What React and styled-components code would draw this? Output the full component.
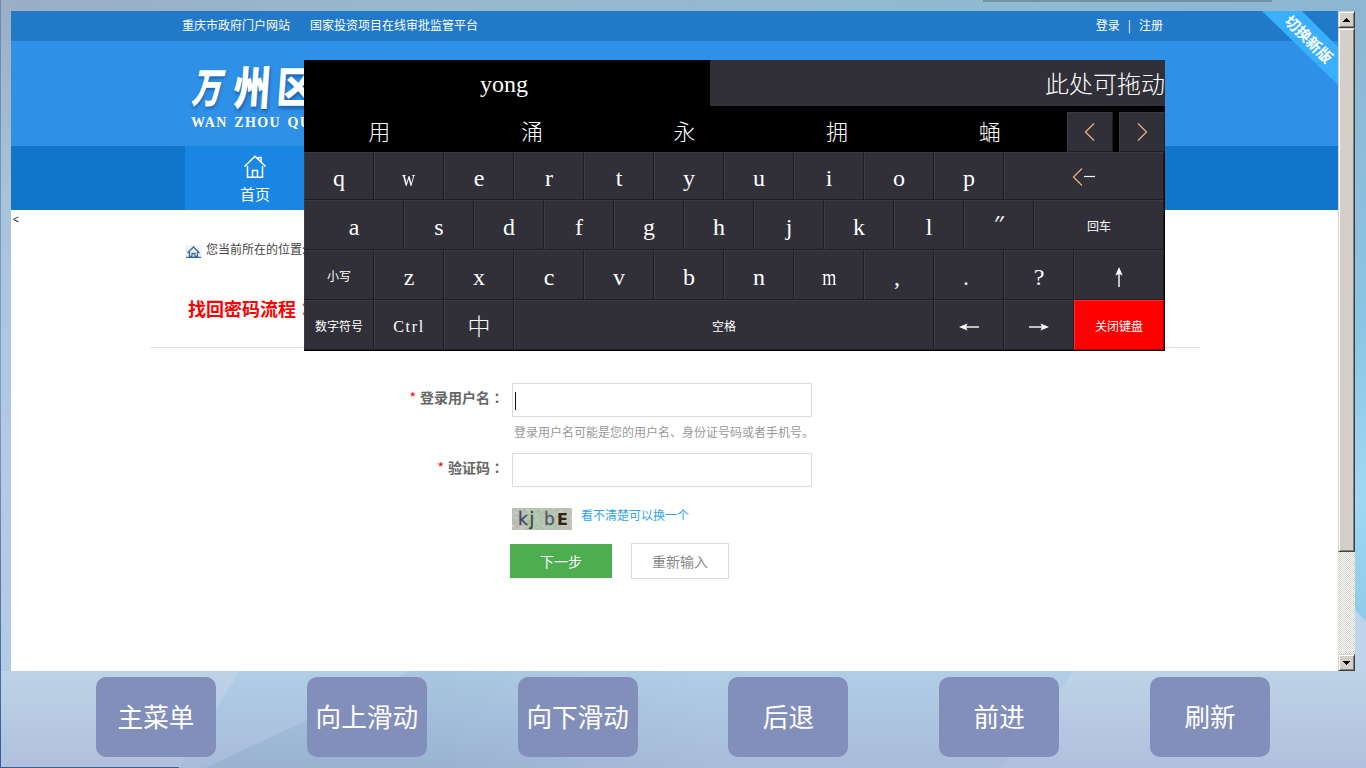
import React from 'react';
import styled, { createGlobalStyle } from 'styled-components';

const SANS = '"Noto Sans CJK SC", "Noto Sans", sans-serif';
const SERIF = '"Liberation Serif", "Noto Sans CJK SC", serif';

const GlobalStyle = createGlobalStyle`
  * { box-sizing: border-box; }
  body { margin: 0; overflow: hidden; font-family: ${SANS}; }
  button { padding: 0; font: inherit; cursor: pointer; }
`;

const Screen = styled.div`
  position: relative;
  width: 1366px;
  height: 768px;
  overflow: hidden;
  padding: 11px 11px 0;
`;

const Wallpaper = styled.svg`
  position: absolute;
  inset: 0;
  z-index: -1;
`;

const Browser = styled.div`
  display: flex;
  width: 1344px;
  height: 660px;
`;

const Page = styled.main`
  position: relative;
  width: 1327px;
  background: #fff;
  overflow: hidden;
`;

const TopBar = styled.div`
  display: flex;
  justify-content: space-between;
  height: 30px;
  padding: 0 175px 0 171px;
  background: #2279c7;
  color: #fff;
  font-size: 12px;
  line-height: 28px;
`;

const TopLinks = styled.div`
  display: flex;
  gap: ${(p) => p.$gap}px;
`;

const Header = styled.header`
  height: 105px;
  padding: 14px 0 0 180px;
  background: #2f90e7;
  color: #fff;
`;

const LogoName = styled.div`
  display: flex;
  height: 60px;
  align-items: center;
  gap: 6px;
  font-size: 37px;
  font-weight: 900;
  line-height: 56px;
  text-shadow: 1px 2px 3px rgba(10, 70, 140, 0.6);
`;

const LogoChar = styled.span`
  transform: skewX(${(p) => p.$skew || 0}deg) scale(${(p) => p.$sx || 1}, ${(p) => p.$sy || 1});
`;

const LogoLatin = styled.div`
  font: 700 14px/16px "Liberation Serif", serif;
  letter-spacing: 1.3px;
  word-spacing: 2px;
`;

const Nav = styled.nav`
  display: flex;
  height: 64px;
  padding-left: 174px;
  background: #1175cb;
`;

const NavItem = styled.a`
  display: flex;
  flex-direction: column;
  align-items: center;
  width: 140px;
  padding-top: 9px;
  background: #1a86e4;
  color: #fff;
  font-size: 15px;
  line-height: 22px;
  svg { margin-bottom: 4px; }
`;

const Stray = styled.div`
  height: 18px;
  padding-left: 2px;
  font: 10px/19px "Liberation Sans", sans-serif;
  color: #222;
`;

const Crumb = styled.div`
  display: flex;
  gap: 4px;
  height: 40px;
  padding: 11px 0 0 174px;
  color: #444;
  font-size: 12px;
  line-height: 20px;
  svg { margin-top: 6px; }
`;

const Title = styled.h1`
  height: 80px;
  width: 1050px;
  margin: 0 0 0 139px;
  padding: 26px 0 0 38px;
  border-bottom: 1px solid #e2e2e2;
  color: #f00;
  font-size: 18px;
  line-height: 28px;
`;

const Form = styled.form`
  display: flex;
  flex-direction: column;
  padding-top: 35px;
`;

const Field = styled.div`
  display: flex;
  gap: 8px;
  height: ${(p) => p.$height}px;
`;

const Label = styled.label`
  width: 493px;
  text-align: right;
  font-size: 14px;
  font-weight: 700;
  line-height: 29px;
  color: #666;
`;

const Star = styled.span`
  color: #f00;
  font-weight: 400;
  margin-right: 4px;
`;

const Colon = styled.span`
  font-family: "Noto Sans CJK TC", sans-serif;
`;

const TextBox = styled.div`
  display: flex;
  align-items: center;
  width: 300px;
  height: 34px;
  padding: 2px 2px 0;
  border: 1px solid #dcdcdc;
`;

const Caret = styled.span`
  width: 1px;
  height: 18px;
  background: #111;
`;

const Hint = styled.p`
  height: 36px;
  margin: 0;
  padding: 5px 0 0 503px;
  color: #999;
  font-size: 12px;
  line-height: 20px;
`;

const CaptchaRow = styled.div`
  display: flex;
  gap: 9px;
  height: 35px;
  padding-left: 501px;
`;

const ChangeLink = styled.a`
  color: #2ea3ee;
  font-size: 12px;
  line-height: 13px;
`;

const Actions = styled.div`
  display: flex;
  align-items: center;
  gap: 19px;
  height: 36px;
  padding-left: 499px;
`;

const FormButton = styled.button`
  width: ${(p) => (p.$primary ? 102 : 98)}px;
  height: ${(p) => (p.$primary ? 34 : 36)}px;
  border: ${(p) => (p.$primary ? 'none' : '1px solid #dcdcdc')};
  background: ${(p) => (p.$primary ? '#4cae4f' : '#fff')};
  color: ${(p) => (p.$primary ? '#fff' : '#888')};
  font-size: 14px;
  line-height: 34px;
`;

const Ribbon = styled.svg`
  position: absolute;
  top: 0;
  right: 0;
`;

const ScrollBar = styled.div`
  display: flex;
  flex-direction: column;
  justify-content: space-between;
  width: 17px;
  background: repeating-conic-gradient(#d4d0c8 0 25%, #fff 0 50%) 0 0 / 2px 2px;
`;

const ScrollPiece = styled.div`
  display: flex;
  align-items: center;
  justify-content: center;
  height: ${(p) => p.$height}px;
  border: 1px solid;
  border-color: #d4d0c8 #404040 #404040 #d4d0c8;
  background: #d4d0c8;
  box-shadow: inset 1px 1px 0 #fff, inset -1px -1px 0 #808080;
`;

const Keyboard = styled.section`
  position: absolute;
  left: 304px;
  top: 60px;
  display: flex;
  flex-direction: column;
  width: 861px;
  height: 291px;
  padding: 0 1px 1px 0;
  background: #000;
  color: #fff;
  font-family: ${SERIF};
  font-size: 24px;
`;

const KeyboardHead = styled.div`
  display: flex;
  height: 46px;
  margin-right: -1px;
  line-height: 49px;
`;

const Typed = styled.div`
  width: 406px;
  padding-right: 6px;
  text-align: center;
`;

const DragHandle = styled.div`
  flex: 1;
  background: #312f38;
  font-weight: 300;
  text-align: right;
  line-height: 50px;
`;

const Candidates = styled.div`
  display: flex;
  height: 46px;
  margin-right: -1px;
`;

const Candidate = styled.div`
  flex: 1;
  padding-right: 2px;
  font-size: 22px;
  font-weight: 300;
  line-height: 53px;
  text-align: center;
`;

const Pager = styled.button`
  display: flex;
  align-items: center;
  justify-content: center;
  width: 46px;
  height: 40px;
  margin: 6px 0 0 ${(p) => p.$gap || 0}px;
  border: 1px solid;
  border-color: #3b3942 #1e1d22 #1e1d22 #3b3942;
  background: #312f38;
`;

const KeyRow = styled.div`
  display: flex;
  height: ${(p) => p.$height}px;
`;

const Key = styled.button`
  display: flex;
  align-items: center;
  justify-content: center;
  width: ${(p) => p.$width}px;
  padding-top: ${(p) => (p.$size ? 4 : 3)}px;
  border: 1px solid;
  border-color: ${(p) => (p.$close ? '#ff2d2d #b00000 #b00000 #ff2d2d' : '#3b3942 #1e1d22 #1e1d22 #3b3942')};
  background: ${(p) => (p.$close ? '#f00' : '#312f38')};
  color: #fff;
  font-family: ${SERIF};
  font-size: ${(p) => p.$size || 24}px;
  font-weight: ${(p) => p.$weight || 400};
  letter-spacing: ${(p) => p.$track || 0}px;
  line-height: 1;
`;

const Condensed = styled.span`
  transform: scaleX(0.76);
`;

const Mark = styled.span`
  transform: translate(${(p) => p.$dx}px, ${(p) => p.$dy || 0}px) skewX(${(p) => p.$skew || 0}deg);
`;

const BottomBar = styled.footer`
  display: flex;
  justify-content: space-between;
  padding: 6px 85px 0;
`;

const BottomButton = styled.button`
  width: 120px;
  height: 80px;
  padding-bottom: 3px;
  border: none;
  border-radius: 10px;
  background: #838fbb;
  color: #fff;
  font-size: 25.6px;
`;

const stroke = { fill: 'none', stroke: '#fff', strokeWidth: 1.5 };

function Chevron({ flip }) {
  return (
    <svg width="12" height="20" viewBox="0 0 12 20">
      <path d={flip ? 'M2 1.5L10.5 10L2 18.5' : 'M10 1.5L1.5 10L10 18.5'} fill="none" stroke="#e8b078" strokeWidth="1.3" />
    </svg>
  );
}

function BackArrow() {
  return (
    <svg width="26" height="20" viewBox="0 0 26 20">
      <path d="M11 .5L2.5 9L11 17.5" fill="none" stroke="#e8b078" strokeWidth="1.3" />
      <path d="M13 8.5H24" stroke="#fff" strokeWidth="1.2" />
    </svg>
  );
}

function Arrow({ angle }) {
  return (
    <svg width="22" height="22" viewBox="-11 -11 22 22">
      <g transform={`rotate(${angle})`}>
        <path d="M-6 0H10" stroke="#fff" strokeWidth="1.4" />
        <path d="M-10 0L-1.5 -3.6L-3 0L-1.5 3.6Z" fill="#fff" />
      </g>
    </svg>
  );
}

function Triangle({ down }) {
  return (
    <svg width="7" height="4" viewBox="0 0 7 4" shapeRendering="crispEdges">
      <path d={down ? 'M0 0H7V1H6V2H5V3H4V4H3V3H2V2H1V1H0Z' : 'M3 0H4V1H5V2H6V3H7V4H0V3H1V2H2V1H3Z'} />
    </svg>
  );
}

function HomeIcon() {
  return (
    <svg width="24" height="24" viewBox="0 0 24 24" {...stroke}>
      <path d="M1.5 11.5L12 1.3L22.5 11.5M4.5 11V22.3H19.5V11M9.5 22.3V15.5H14.5V22.3M15.5 4V2.5H18V7" />
    </svg>
  );
}

function CrumbIcon() {
  return (
    <svg width="17" height="13" viewBox="0 0 17 13">
      <rect width="17" height="12" fill="#f1f5f7" />
      <path d="M1 12.4H16M2.5 8L8.5 2L14.5 8M4.5 7V11.5H7V8.5H10V11.5H12.5V7" fill="none" stroke="#34699a" strokeWidth="1.3" />
    </svg>
  );
}

function Captcha() {
  const lines = [];
  for (let i = 0; i < 240; i += 1) {
    const x = (i * 37 + ((i * i) % 11)) % 62;
    const y = (i * 17 + ((i * i) % 7)) % 23;
    const palette = x > 44 || x < 12 ? ['#e6bfd6', '#d0a8c0', '#a9bfa6', '#d9cfd6'] : ['#98b898', '#c6d6c2', '#a8bfa6', '#d0bccb'];
    lines.push(
      <path
        key={i}
        d={`M${x} ${y}l${((i * 7) % 9) - 4} ${((i * 5) % 7) - 3}`}
        stroke={palette[i % 4]}
        strokeWidth="0.9"
      />,
    );
  }
  return (
    <svg width="60" height="22" viewBox="0 0 60 22">
      <rect width="60" height="22" fill="#b6c4b2" />
      {lines}
      <g fontFamily='"DejaVu Sans", sans-serif' fontSize="17">
        <text x="6" y="17" fill="#4b4266" stroke="#4b4266" strokeWidth="0.3">k</text>
        <text x="17.5" y="17" fill="#304a35" stroke="#304a35" strokeWidth="0.3">j</text>
        <text x="32" y="17" fill="#56586a" stroke="#56586a" strokeWidth="0.3">b</text>
        <text x="45" y="17" fill="#33230f" fontWeight="700" fontSize="16">E</text>
      </g>
    </svg>
  );
}

const letters = (chars) => [...chars].map((c) => ({ w: 70, c }));
const wide = (c) => ({ w: 70, c: <Condensed>{c}</Condensed> });

const rows = [
  { h: 48, keys: [...letters('q'), wide('w'), ...letters('ertyuiop'), { w: 160, c: <BackArrow /> }] },
  {
    h: 50,
    keys: [
      { w: 100, c: 'a' },
      ...letters('sdfghjkl'),
      { w: 70, c: <Mark $dx={-1} $dy={-3} $skew={-18}>″</Mark> },
      { w: 130, c: '回车', s: 12 },
    ],
  },
  {
    h: 50,
    keys: [
      { w: 70, c: '小写', s: 12 },
      ...letters('zxcvbn'),
      wide('m'),
      { w: 70, c: <Mark $dx={-2}>,</Mark> },
      { w: 70, c: <Mark $dx={-3}>.</Mark> },
      ...letters('?'),
      { w: 90, c: <Arrow angle={90} /> },
    ],
  },
  {
    h: 50,
    keys: [
      { w: 70, c: '数字符号', s: 12 },
      { w: 70, c: 'Ctrl', s: 16, t: 1.7 },
      { w: 70, c: '中', s: 23, weight: 300 },
      { w: 420, c: '空格', s: 12 },
      { w: 70, c: <Arrow angle={0} /> },
      { w: 70, c: <Arrow angle={180} /> },
      { w: 90, c: '关闭键盘', s: 12, close: true },
    ],
  },
];

export default function App() {
  return (
    <Screen>
      <GlobalStyle />
      <Wallpaper width="1366" height="768" viewBox="0 0 1366 768">
        <defs>
          <linearGradient id="top" x2="1" y2="0">
            <stop offset="0" stopColor="#9aaec6" />
            <stop offset="0.3" stopColor="#98b8cd" />
            <stop offset="0.75" stopColor="#8fbad1" />
            <stop offset="1" stopColor="#8db6d2" />
          </linearGradient>
          <linearGradient id="left" x2="0" y2="1">
            <stop offset="0" stopColor="#9aaec6" />
            <stop offset="0.3" stopColor="#a9c3da" />
            <stop offset="0.7" stopColor="#b5cae4" />
            <stop offset="1" stopColor="#b3cbe0" />
          </linearGradient>
          <linearGradient id="right" x2="0" y2="1">
            <stop offset="0" stopColor="#8db6d2" />
            <stop offset="0.5" stopColor="#8bc4e4" />
            <stop offset="0.8" stopColor="#a0d8f3" />
            <stop offset="1" stopColor="#8fcbea" />
          </linearGradient>
          <linearGradient id="pale" x2="0" y2="1">
            <stop offset="0" stopColor="#bdd3e7" />
            <stop offset="1" stopColor="#b0c0dc" />
          </linearGradient>
          <linearGradient id="mid" x2="0" y2="1">
            <stop offset="0" stopColor="#b0cee6" />
            <stop offset="1" stopColor="#a9bbd9" />
          </linearGradient>
          <linearGradient id="deep" x2="0" y2="1">
            <stop offset="0" stopColor="#a8c6df" />
            <stop offset="1" stopColor="#98b1d1" />
          </linearGradient>
          <linearGradient id="fade" x2="1" y2="0">
            <stop offset="0.5" stopColor="#fff" />
            <stop offset="1" stopColor="#000" />
          </linearGradient>
          <mask id="soft">
            <rect x="205" y="671" width="500" height="97" fill="url(#fade)" />
          </mask>
          <linearGradient id="edge" x2="0" y2="1">
            <stop offset="0" stopColor="#688cac" />
            <stop offset="0.5" stopColor="#7a9fd0" />
            <stop offset="1" stopColor="#33599a" />
          </linearGradient>
        </defs>
        <rect width="1366" height="11" fill="url(#top)" />
        <rect y="0" width="11" height="671" fill="url(#left)" />
        <rect x="1355" y="11" width="11" height="610" fill="url(#right)" />
        <path d="M1355 610L1366 621V671H1355Z" fill="#bfd3ea" />
        <rect y="671" width="1366" height="97" fill="url(#pale)" />
        <path d="M240 671H1074L1000 768H179Z" fill="url(#mid)" />
        <path d="M410 671H705V768H205L307 720Z" fill="url(#deep)" mask="url(#soft)" opacity="0.8" />
        <rect x="983" width="289" height="2" fill="#66828f" opacity="0.7" />
        <rect width="1" height="768" fill="url(#edge)" />
        <rect y="767" width="179" height="1" fill="#355c9c" />
      </Wallpaper>

      <Browser>
        <Page>
          <TopBar>
            <TopLinks $gap={20}>
              <span>重庆市政府门户网站</span>
              <span>国家投资项目在线审批监管平台</span>
            </TopLinks>
            <TopLinks $gap={8}>
              <span>登录</span>
              <span>|</span>
              <span>注册</span>
            </TopLinks>
          </TopBar>
          <Header>
            <LogoName>
              <LogoChar $skew={-12} $sx={0.8} $sy={1.12}>万</LogoChar>
              <LogoChar $skew={-4} $sy={1.25}>州</LogoChar>
              <LogoChar $skew={-4} $sy={1.15}>区</LogoChar>
            </LogoName>
            <LogoLatin>WAN ZHOU QU</LogoLatin>
          </Header>
          <Nav>
            <NavItem>
              <HomeIcon />
              首页
            </NavItem>
          </Nav>
          <Stray>&lt;</Stray>
          <Crumb>
            <CrumbIcon />
            您当前所在的位置:
          </Crumb>
          <Title>找回密码流程<Colon>：</Colon></Title>
          <Form>
            <Field $height={34}>
              <Label><Star>*</Star>登录用户名<Colon>：</Colon></Label>
              <TextBox><Caret /></TextBox>
            </Field>
            <Hint>登录用户名可能是您的用户名、身份证号码或者手机号。</Hint>
            <Field $height={55}>
              <Label><Star>*</Star>验证码<Colon>：</Colon></Label>
              <TextBox />
            </Field>
            <CaptchaRow>
              <Captcha />
              <ChangeLink>看不清楚可以换一个</ChangeLink>
            </CaptchaRow>
            <Actions>
              <FormButton type="button" $primary>下一步</FormButton>
              <FormButton type="button">重新输入</FormButton>
            </Actions>
          </Form>
          <Ribbon width="76" height="74" viewBox="0 0 76 74">
            <path d="M0 0H40L76 36V74Z" fill="#39b0ff" />
            <text
              transform="translate(46 29) rotate(45)"
              textAnchor="middle"
              y="4.5"
              fill="#fff"
              fontFamily={SANS}
              fontSize="15"
              fontWeight="700"
            >
              切换新版
            </text>
          </Ribbon>
        </Page>
        <ScrollBar>
          <div>
            <ScrollPiece $height={17}><Triangle /></ScrollPiece>
            <ScrollPiece $height={524} />
          </div>
          <ScrollPiece $height={17}><Triangle down /></ScrollPiece>
        </ScrollBar>
      </Browser>

      <BottomBar>
        {['主菜单', '向上滑动', '向下滑动', '后退', '前进', '刷新'].map((t) => (
          <BottomButton key={t}>{t}</BottomButton>
        ))}
      </BottomBar>

      <Keyboard>
        <KeyboardHead>
          <Typed>yong</Typed>
          <DragHandle>此处可拖动</DragHandle>
        </KeyboardHead>
        <Candidates>
          {[...'用涌永拥蛹'].map((c) => (
            <Candidate key={c}>{c}</Candidate>
          ))}
          <Pager><Chevron /></Pager>
          <Pager $gap={6}><Chevron flip /></Pager>
        </Candidates>
        {rows.map((row, i) => (
          <KeyRow key={i} $height={row.h}>
            {row.keys.map((k, j) => (
              <Key key={j} $width={k.w} $size={k.s} $track={k.t} $weight={k.weight} $close={k.close}>
                {k.c}
              </Key>
            ))}
          </KeyRow>
        ))}
      </Keyboard>
    </Screen>
  );
}
